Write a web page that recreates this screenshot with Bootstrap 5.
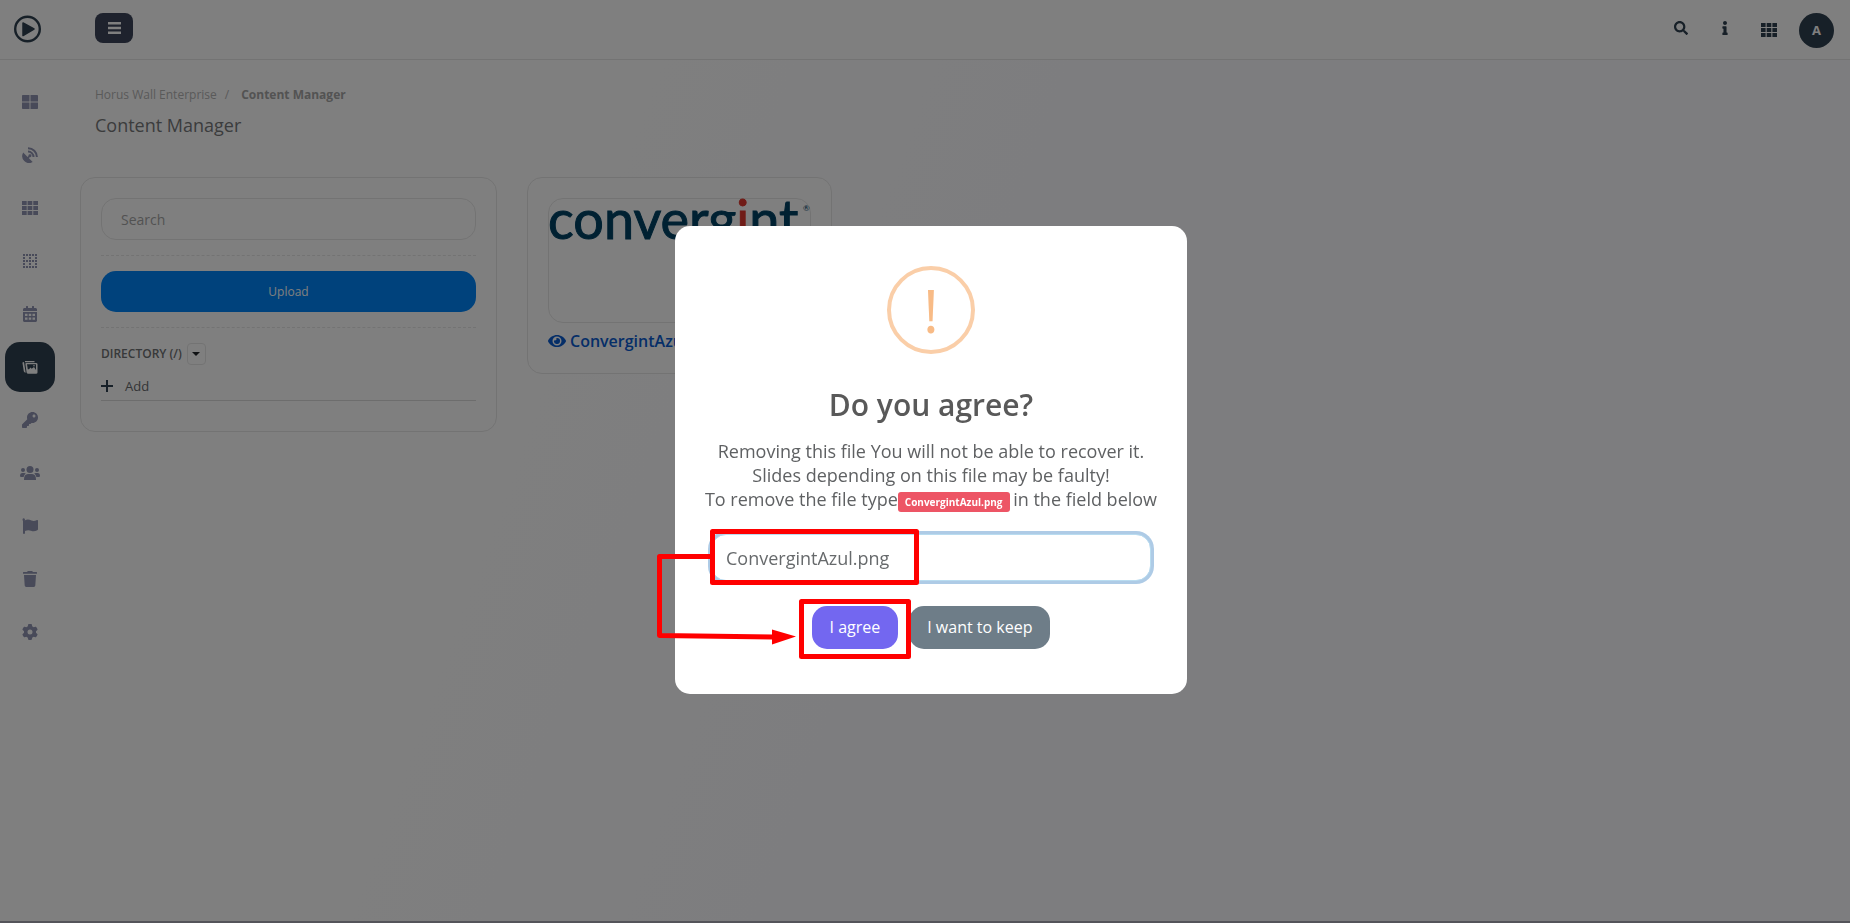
<!DOCTYPE html>
<html lang="en">
<head>
<meta charset="utf-8">
<meta name="viewport" content="width=device-width, initial-scale=1">
<title>Content Manager</title>
<link href="https://cdn.jsdelivr.net/npm/bootstrap@5.3.0/dist/css/bootstrap.min.css" rel="stylesheet">
<style>
:root{--ink:#2f4050;--line:#e7e7e7}
body{font-family:"Open Sans",sans-serif;font-size:14px;color:#676a6c;background:linear-gradient(110deg,#fff 25%,#fbfbff 50%,#fbfbff)}
.page{min-height:100vh;border-bottom:2px solid #a9a9b4}
.topbar{height:60px;border-bottom:1px solid var(--line);background:#fff;padding-right:16px}
.brand{width:60px;padding:0 0 2px 14px}
.ico{fill:currentColor;display:block}
.menu-btn{width:38px;height:30px;border-radius:8px;background:#3c445a;color:#fff;margin-left:35px}
.topbar .tool{color:var(--ink);width:44px}
.avatar{width:35px;height:35px;border-radius:50%;background:var(--ink);color:#fff;font-size:13px;margin:2px 0 0 8px}
.side{width:60px;padding-top:17px;gap:3px}
.side .nav-link{width:50px;height:50px;padding:0;border-radius:15px;color:#9094b2}
.side .nav-link.active{background:var(--ink);color:#fff}
.content-area{padding:25px 0 0 5px}
.crumbs{padding-left:30px;line-height:20px}
.crumbs .breadcrumb{--bs-breadcrumb-item-padding-x:8px;--bs-breadcrumb-divider-color:#b4b4b4;font-size:12px}
.crumbs .breadcrumb a{color:#b4b4b4;text-decoration:none}
.crumbs .breadcrumb .active{color:#a6a6a6;font-weight:700}
.crumbs .breadcrumb .active::before{font-weight:400;padding-right:12px}
.crumbs h1{font-size:18px;line-height:24px;font-weight:400;color:#77797b;margin:8px 0 40px}
.g30{--bs-gutter-x:30px}
.wrap{padding:0 12px 0 15px}
.panel{border:1px solid var(--line);border-radius:15px;background:#fff;padding:20px}
.find{height:42px;border-radius:15px;border-color:var(--line);padding:0 19px;font-size:14px}
.find::placeholder{color:#a5a5a5}
.dash{border:0;border-top:1px dashed #e7e7e7;opacity:1;margin:15px 0}
.upload{height:41px;border-radius:15px;background:#0084f8;color:#fff;font-size:12px}
.dir{font-size:12px;font-weight:600;color:#6f7274;gap:5px}
.caret-btn{width:19px;height:22px;border:1px solid var(--line);border-radius:4px}
.add-row{border-bottom:1px solid #dadada;padding:11px 0 3px;line-height:20px;font-size:13px;margin-bottom:10px}
.add-row svg{color:var(--ink)}
.thumb{height:125px;border:1px solid var(--line);border-radius:15px}
.thumb text{font-family:Lato,sans-serif;font-size:54px;fill:#004264;stroke:#004264;stroke-width:1px}
.thumb .dot-i{fill:#e0382f;stroke:#e0382f}
.thumb .reg{font-size:8px;stroke:none}
.file-link{color:#0a5cd0;font-size:16px;font-weight:600;line-height:24px;text-decoration:none;margin:6px 0 0}
.ask{background:rgba(0,0,0,.5);padding-left:12px}
.ask .modal-dialog{max-width:512px;padding-bottom:3px}
.ask .modal-content{border:0;border-radius:15px;padding:40px 28px 45px;color:#5f6163;text-align:center}
.warn-ring{width:88px;height:88px;border:4px solid #facea8;border-radius:50%;color:#f8bb86;font-size:60px;line-height:80px}
.ask h2{font-size:30px;line-height:36px;font-weight:600;color:#595959;margin:33px 0 16px}
.ask p{font-size:18px;line-height:24px;margin:0 -8px 22px}
.ask .badge{font-size:10px;background:#ed5565;border-radius:3px;padding:5px 7px;line-height:10px;margin-right:-1px}
.typed{height:47px;width:auto;margin:0 8px;font-size:18px;color:#676a6c;border:1px solid #b9dcf0;border-radius:15px;box-shadow:0 0 0 3px #aecbe6;padding:0 14px}
.acts{gap:11px;margin-top:25px}
.acts .btn{height:43px;border:0;border-radius:15px;font-size:16px;color:#fff;padding:0 18px 2px}
.yes{background:#7367f0}.keep{background:#6e7d88}
.marks{left:-20px;top:300px;pointer-events:none}
</style>
</head>
<body>
<div class="page d-flex flex-column">
<header class="topbar d-flex align-items-center">
  <a class="brand" href="#" aria-label="Home"><svg class="ico" width="27" height="28" viewBox="0 0 27 28"><circle cx="13.500" cy="14" r="12.300" fill="none" stroke="#2f4050" stroke-width="2.400"/><path d="M9 8 20 14 9 20.500z" fill="#2f4050" stroke="#2f4050" stroke-width="1.500" stroke-linejoin="round"/></svg></a>
  <button class="menu-btn btn p-0 d-flex align-items-center justify-content-center mb-1" type="button" aria-label="Menu"><svg class="ico" width="13" height="12" viewBox="0 0 13 12"><path d="M0 0h13v2.500H0zM0 4.700h13v2.500H0zM0 9.400h13v2.500H0z"/></svg></button>
  <nav class="d-flex align-items-center ms-auto" aria-label="Tools">
    <a class="tool d-flex justify-content-center pb-1" href="#" aria-label="Search"><svg class="ico" width="14" height="14" viewBox="0 0 512 512"><path d="M505 442.700L405.300 343c-4.500-4.500-10.600-7-17-7H372c27.600-35.300 44-79.700 44-128C416 93.100 322.900 0 208 0S0 93.100 0 208s93.100 208 208 208c48.300 0 92.700-16.400 128-44v16.300c0 6.400 2.500 12.500 7 17l99.700 99.700c9.400 9.400 24.600 9.400 33.900 0l28.300-28.300c9.400-9.400 9.400-24.600.1-34zM208 336c-70.700 0-128-57.200-128-128 0-70.700 57.200-128 128-128 70.700 0 128 57.200 128 128 0 70.700-57.200 128-128 128z"/></svg></a>
    <a class="tool d-flex justify-content-center pb-1" href="#" aria-label="Information"><svg class="ico" width="6" height="14" viewBox="0 0 192 512"><path d="M20 424h20V280H20c-11 0-20-9-20-20v-48c0-11 9-20 20-20h112c11 0 20 9 20 20v212h20c11 0 20 9 20 20v48c0 11-9 20-20 20H20c-11 0-20-9-20-20v-48c0-11 9-20 20-20zM96 0C56 0 24 32 24 72s32 72 72 72 72-32 72-72S136 0 96 0z"/></svg></a>
    <a class="tool d-flex justify-content-center" href="#" aria-label="Apps"><svg class="ico" width="16" height="14" viewBox="0 0 16 14"><path d="M0 0h4.600v4H0zM5.700 0h4.600v4H5.700zM11.400 0H16v4h-4.600zM0 5h4.600v4H0zM5.700 5h4.600v4H5.700zM11.400 5H16v4h-4.600zM0 10h4.600v4H0zM5.700 10h4.600v4H5.700zM11.400 10H16v4h-4.600z"/></svg></a>
    <button class="avatar btn p-0 fw-bold" type="button">A</button>
  </nav>
</header>
<div class="d-flex flex-grow-1">
  <nav class="side nav flex-column align-items-center flex-shrink-0" aria-label="Main">
    <a class="nav-link d-flex align-items-center justify-content-center" href="#" aria-label="Dashboard"><svg class="ico" width="16" height="14" viewBox="0 0 16 14"><path d="M0 .8Q0 0 .8 0h6.700v6.500H0zM8.500 0h6.700q.8 0 .8.800v5.700H8.500zM0 7.500h7.500V14H.8q-.8 0-.8-.8zM8.500 7.500H16v5.700q0 .8-.8.800H8.500z"/></svg></a>
    <a class="nav-link d-flex align-items-center justify-content-center" href="#" aria-label="Signal"><svg class="ico" width="16" height="16" viewBox="0 0 16 16"><path d="M1.200 5.500 5.600 10l.9-1a1.500 1.500 0 1 1 1.200 1.200l-1 .9 4 4A7 7 0 0 1 1.200 5.500z"/><path d="M6 1.200A8.800 8.800 0 0 1 14.900 10M6 4.600A5.400 5.400 0 0 1 11.500 10" fill="none" stroke="currentColor" stroke-width="2"/></svg></a>
    <a class="nav-link d-flex align-items-center justify-content-center" href="#" aria-label="Walls"><svg class="ico" width="16" height="14" viewBox="0 0 16 14"><path d="M0 0h4.700v4H0zM5.600 0h4.700v4H5.600zM11.300 0H16v4h-4.700zM0 5h4.700v4H0zM5.600 5h4.700v4H5.600zM11.300 5H16v4h-4.700zM0 10h4.700v4H0zM5.600 10h4.700v4H5.600zM11.300 10H16v4h-4.700z"/></svg></a>
    <a class="nav-link d-flex align-items-center justify-content-center" href="#" aria-label="Layouts"><svg class="ico" width="14" height="14" viewBox="0 0 14 14"><path d="M0 0h2v2H0zM3 0h2v2H3zM6 0h2v2H6zM9 0h2v2H9zM12 0h2v2h-2zM0 3h2v2H0zM6 3h2v2H6zM12 3h2v2h-2zM0 6h2v2H0zM3 6h2v2H3zM6 6h2v2H6zM9 6h2v2H9zM12 6h2v2h-2zM0 9h2v2H0zM6 9h2v2H6zM12 9h2v2h-2zM0 12h2v2H0zM3 12h2v2H3zM6 12h2v2H6zM9 12h2v2H9zM12 12h2v2h-2z"/></svg></a>
    <a class="nav-link d-flex align-items-center justify-content-center" href="#" aria-label="Schedule"><svg class="ico" width="14" height="16" viewBox="0 0 448 512"><path fill-rule="evenodd" d="M0 464c0 26 22 48 48 48h352c26 0 48-22 48-48V192H0zM64 250h80v70H64zm120 0h80v70h-80zm120 0h80v70h-80zM64 370h80v70H64zm120 0h80v70h-80zm120 0h80v70h-80zM400 64h-48V16q0-16-16-16h-32q-16 0-16 16v48H160V16q0-16-16-16h-32q-16 0-16 16v48H48C22 64 0 86 0 112v48h448v-48c0-26-22-48-48-48z"/></svg></a>
    <a class="nav-link active d-flex align-items-center justify-content-center" href="#" aria-label="Content manager"><svg class="ico" width="16" height="13" viewBox="0 0 16 13"><path fill-rule="evenodd" d="M4.200 2H14q1.500 0 1.500 1.300v8.200q0 1.300-1.500 1.300H6.200Q5 12.800 4.600 11.500L3.400 3Q3.300 2 4.200 2zM5 3.200l.8 5 1.200 0 1.500-1.700 1.200 1.200L12 6l2 3V3.200zM12 4a.8.800 0 1 1 0 1.600.8.800 0 0 1 0-1.600z"/><path d="M3 0h9.500v1.200H3zM.4 1.400 2 1.100l1.700 10.600q-1.600-.2-1.900-1.500z"/></svg></a>
    <a class="nav-link d-flex align-items-center justify-content-center" href="#" aria-label="Keys"><svg class="ico" width="16" height="16" viewBox="0 0 512 512"><path d="M512 176C512 273 433 352 336 352c-11 0-22-1-33-3l-24 27a24 24 0 0 1-18 8H224v40c0 13-11 24-24 24h-40v40c0 13-11 24-24 24H24c-13 0-24-11-24-24v-78c0-6 3-12 7-17l162-162C163 214 160 195 160 176 160 79 239 0 336 0 433 0 512 79 512 176zM336 128c0 27 21 48 48 48s48-21 48-48-21-48-48-48-48 21-48 48z"/></svg></a>
    <a class="nav-link d-flex align-items-center justify-content-center" href="#" aria-label="Users"><svg class="ico" width="20" height="14" viewBox="0 0 20 14"><circle cx="10" cy="3.500" r="3.500"/><circle cx="3" cy="4" r="2"/><circle cx="17" cy="4" r="2"/><path d="M4 14q-.2-6 4-6h4q4.200 0 4 6zM0 9.500Q0 7 2 7h2.200q1 0 1.600.6Q4 8.700 3.600 11H1q-1 0-1-1.500zM20 9.500Q20 7 18 7h-2.200q-1 0-1.600.6Q16 8.700 16.400 11H19q1 0 1-1.500z"/></svg></a>
    <a class="nav-link d-flex align-items-center justify-content-center" href="#" aria-label="Flags"><svg class="ico" width="16" height="16" viewBox="0 0 16 16"><path d="M2.600 2.400C5.500 1 7 1.500 9.500 2.500c2 .8 3.500.4 5.500-.5q1-.3 1 .8v8.500q0 .7-.7 1c-2.500 1.300-4.300 1.200-6.300.4-2.200-.8-3.800-.7-6 .3V15q0 1-1 1t-1-1V3Q.500 2.400.500 1.600.600.300 1.800.300q1.200.1 1.200 1.500z"/></svg></a>
    <a class="nav-link d-flex align-items-center justify-content-center" href="#" aria-label="Trash"><svg class="ico" width="14" height="16" viewBox="0 0 14 16"><path d="M0 1.500q0-.5.500-.5H4l.6-.7Q4.800 0 5.200 0h3.600q.4 0 .6.300L10 1h3.500q.5 0 .5.500v1.200H0zM1 4h12l-.7 10.600q-.1 1.400-1.500 1.400H3.200q-1.400 0-1.500-1.400z"/></svg></a>
    <a class="nav-link d-flex align-items-center justify-content-center" href="#" aria-label="Settings"><svg class="ico" width="16" height="16" viewBox="0 0 512 512"><path d="M495.900 166.600c3.200 8.700.5 18.400-6.400 24.600l-43.300 39.400c1.100 8.300 1.700 16.800 1.700 25.400s-.6 17.100-1.700 25.400l43.300 39.400c6.900 6.200 9.600 15.900 6.400 24.600c-4.400 11.900-9.700 23.300-15.800 34.300l-4.700 8.100c-6.600 11-14 21.400-22.100 31.200c-5.900 7.200-15.700 9.600-24.500 6.800l-55.700-17.700c-13.400 10.300-28.200 18.900-44 25.400l-12.500 57.100c-2 9.100-9 16.300-18.200 17.800c-13.800 2.300-28 3.500-42.500 3.500s-28.700-1.200-42.500-3.500c-9.200-1.500-16.200-8.700-18.200-17.800l-12.500-57.100c-15.800-6.500-30.600-15.100-44-25.400L83.100 425.900c-8.800 2.800-18.600.3-24.500-6.800c-8.100-9.800-15.500-20.200-22.100-31.200l-4.700-8.100c-6.100-11-11.400-22.400-15.800-34.300c-3.200-8.700-.5-18.400 6.400-24.600l43.300-39.400C64.600 273.100 64 264.600 64 256s.6-17.100 1.700-25.400L22.400 191.200c-6.900-6.200-9.600-15.900-6.400-24.600c4.400-11.900 9.700-23.300 15.800-34.300l4.700-8.100c6.600-11 14-21.400 22.100-31.200c5.900-7.200 15.700-9.600 24.500-6.800l55.700 17.700c13.400-10.300 28.200-18.900 44-25.400l12.500-57.100c2-9.100 9-16.300 18.200-17.800C227.300 1.200 241.500 0 256 0s28.700 1.200 42.500 3.500c9.200 1.500 16.200 8.700 18.200 17.800l12.500 57.100c15.800 6.500 30.600 15.100 44 25.400l55.700-17.700c8.800-2.800 18.600-.3 24.500 6.800c8.100 9.800 15.500 20.200 22.100 31.200l4.700 8.100c6.100 11 11.400 22.400 15.800 34.300zM256 336a80 80 0 1 0 0-160 80 80 0 1 0 0 160z"/></svg></a>
  </nav>
  <main class="content-area flex-grow-1">
    <div class="crumbs">
      <nav aria-label="Breadcrumb"><ol class="breadcrumb mb-0"><li class="breadcrumb-item"><a href="#">Horus Wall Enterprise</a></li><li class="breadcrumb-item active" aria-current="page">Content Manager</li></ol></nav>
      <h1>Content Manager</h1>
    </div>
    <div class="wrap">
      <div class="row g30">
        <div class="col-3">
          <section class="panel">
            <input class="form-control find" type="search" placeholder="Search" aria-label="Search">
            <hr class="dash">
            <button class="btn upload w-100 p-0" type="button">Upload</button>
            <hr class="dash">
            <div class="dir d-flex align-items-center"><span>DIRECTORY (/)</span><button class="caret-btn btn p-0 d-flex align-items-center justify-content-center" type="button" aria-label="Open directory"><svg class="ico" width="8" height="4" viewBox="0 0 8 4"><path d="M0 0h8L4 4z"/></svg></button></div>
            <div class="add-row"><a class="d-inline-flex align-items-center text-reset text-decoration-none" href="#"><svg class="ico me-2" width="12" height="12" viewBox="0 0 12 12"><path d="M5 0h2v5h5v2H7v5H5V7H0V5h5z"/></svg><span class="ps-1">Add</span></a></div>
          </section>
        </div>
        <div class="col-9">
          <div class="row g30">
            <div class="col-3">
              <section class="panel d-flex flex-column">
                <div class="thumb"><svg class="d-block overflow-visible" width="100%" height="60" role="img" aria-label="convergint"><text x="-1" y="40">converg<tspan class="dot-i">i</tspan>nt</text><text class="reg" x="254" y="12">®</text></svg></div>
                <a class="file-link d-flex align-items-center gap-1" href="#"><svg class="ico" width="18" height="16" viewBox="0 0 576 512"><path d="M572.500 241.400C518.300 135.600 410.900 64 288 64S57.700 135.600 3.500 241.400a32.400 32.400 0 0 0 0 29.200C57.700 376.400 165.100 448 288 448s230.300-71.600 284.500-177.400a32.400 32.400 0 0 0 0-29.200zM288 400a144 144 0 1 1 144-144 144 144 0 0 1-144 144zm0-240a95.300 95.300 0 0 0-25.300 3.800 47.900 47.900 0 0 1-66.900 66.900A95.800 95.800 0 1 0 288 160z"/></svg><span>ConvergintAzul.png</span></a>
              </section>
            </div>
          </div>
        </div>
      </div>
    </div>
  </main>
</div>
</div>

<div class="modal ask d-block" tabindex="-1" role="dialog" aria-modal="true" aria-labelledby="ask-title">
  <div class="modal-dialog modal-dialog-centered my-0 min-vh-100">
    <div class="modal-content">
      <div class="warn-ring mx-auto" aria-hidden="true">!</div>
      <h2 id="ask-title">Do you agree?</h2>
      <p>Removing this file You will not be able to recover it.<br>Slides depending on this file may be faulty!<br>To remove the file type<span class="badge">ConvergintAzul.png</span> in the field below</p>
      <input class="form-control typed" type="text" value="ConvergintAzul.png" aria-label="File name">
      <div class="acts d-flex justify-content-center">
        <button class="btn yes" type="button">I agree</button>
        <button class="btn keep" type="button">I want to keep</button>
      </div>
      <svg class="marks position-absolute" width="270" height="140" viewBox="0 0 270 140" aria-hidden="true">
        <g fill="none" stroke="#f00" stroke-width="5" stroke-linejoin="round"><path d="M57.500 5.500h204v51h-204z"/><path d="M146.500 75.500h107v55h-107z"/><path d="M57 30.500H4.500v79L118 111"/></g>
        <path d="M117 103.500 141 110.500 117 118.500z" fill="#f00"/>
      </svg>
    </div>
  </div>
</div>
<script src="https://cdn.jsdelivr.net/npm/bootstrap@5.3.0/dist/js/bootstrap.bundle.min.js"></script>
</body>
</html>
